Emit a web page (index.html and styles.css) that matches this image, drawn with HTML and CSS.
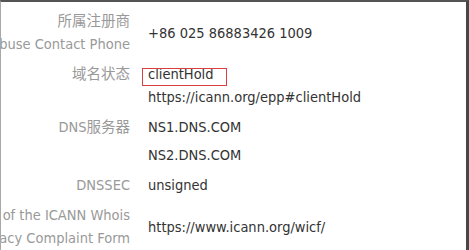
FILE: index.html
```html
<!DOCTYPE html>
<html lang="zh-CN">

<head>
    <meta charset="UTF-8">
    <meta name="viewport" content="width=device-width, initial-scale=1.0">
    <title>域名信息</title>
    <link rel="stylesheet" href="styles.css">
</head>

<body>
    <div class="panel">
        <div class="row mid">
            <div class="label">
                <span>所属注册商</span>
                <span>Registrar Abuse Contact Phone</span>
            </div>
            <div class="value">+86 025 86883426 1009</div>
        </div>
        <div class="row">
            <div class="label"><span>域名状态</span></div>
            <div class="value">
                <div class="status">clientHold<span class="mark"></span></div>
                <div>https://icann.org/epp#clientHold</div>
            </div>
        </div>
        <div class="row">
            <div class="label"><span>DNS服务器</span></div>
            <div class="value">
                <div>NS1.DNS.COM</div>
                <div class="ns">NS2.DNS.COM</div>
            </div>
        </div>
        <div class="row">
            <div class="label"><span>DNSSEC</span></div>
            <div class="value">unsigned</div>
        </div>
        <div class="row mid">
            <div class="label">
                <span>URL of the ICANN Whois</span>
                <span>Inaccuracy Complaint Form</span>
            </div>
            <div class="value">https://www.icann.org/wicf/</div>
        </div>
    </div>
</body>

</html>
```

FILE: styles.css
```css
body {
    margin: 0;
    padding: 0;
    background-color: #ffffff;
    font-family: "DejaVu Sans Condensed", "DejaVu Sans", "Noto Sans CJK SC", sans-serif;
    font-stretch: condensed;
    font-size: 14.5px;
    line-height: 23px;
}

.panel {
    height: 100vh;
    box-sizing: border-box;
    border-top: 2px solid #555555;
    border-right: 3px solid #474747;
    border-left: 1px solid #a8a8a8;
    padding-top: 5px;
    overflow: hidden;
}

.row {
    display: grid;
    grid-template-columns: 129px 1fr;
    column-gap: 18px;
    align-items: start;
    padding: 3px 0 4px;
}

.row.mid {
    align-items: center;
}

.label {
    display: flex;
    flex-direction: column;
    align-items: flex-end;
    color: #999999;
    white-space: nowrap;
}

.value {
    color: #333333;
    white-space: nowrap;
}

.status {
    position: relative;
}

.mark {
    position: absolute;
    left: -6px;
    top: 5px;
    width: 85px;
    height: 18px;
    box-sizing: border-box;
    border: 1px solid #d9403f;
}

.ns {
    margin-top: 5px;
}
```
